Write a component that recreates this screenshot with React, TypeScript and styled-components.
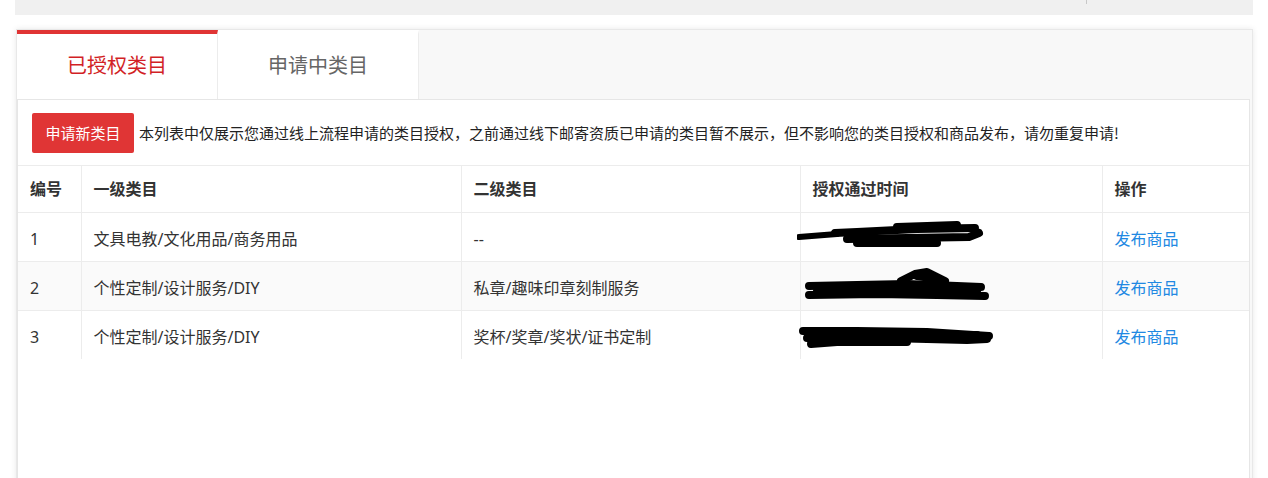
import styled, { createGlobalStyle } from "styled-components";

const GlobalStyle = createGlobalStyle`
    body {
        margin: 0;
        background: #fff;
        font-family: "Noto Sans", "Noto Sans CJK SC", sans-serif;
        color: #333;
    }
`;

const Page = styled.div`
    padding-left: 15px;
    width: 1238px;
`;

const TopBar = styled.div`
    height: 15px;
    background: #f0f0f0;
    display: flex;
    justify-content: flex-end;
    padding-right: 166px;
`;

const TopDivider = styled.span`
    width: 1px;
    height: 4px;
    background: #c8c8c8;
`;

const Panel = styled.div`
    margin: 14px 0 0 1px;
    width: 1235px;
    border: 1px solid #e8e8e8;
    background: #f8f8f8;
    box-shadow: 0 0 6px rgba(0, 0, 0, 0.09);
`;

const Tabs = styled.div`
    display: flex;
    height: 69px;
`;

const Tab = styled.div<{ $active?: boolean }>`
    width: 201px;
    box-sizing: border-box;
    display: flex;
    align-items: center;
    justify-content: center;
    background: #fff;
    border-right: 1px solid #ececec;
    border-top: 4px solid ${({ $active }) => ($active ? "#e03434" : "transparent")};
    padding-bottom: 4px;
    font-size: 20px;
    color: ${({ $active }) => ($active ? "#d21f26" : "#666")};
    font-family: "Noto Sans CJK SC", sans-serif;
`;

const Content = styled.div`
    margin: 0 2px 0 0;
    border: 1px solid #e6e6e6;
    border-bottom: none;
    background: #fff;
    min-height: 400px;
`;

const Toolbar = styled.div`
    height: 65px;
    display: flex;
    align-items: center;
    padding-left: 14px;
    gap: 5px;
    border-bottom: 1px solid #ececec;
`;

const ApplyButton = styled.button`
    width: 102px;
    height: 40px;
    border: none;
    border-radius: 2px;
    background: #e03535;
    color: #fff;
    font-size: 15px;
    font-family: "Noto Sans CJK SC", sans-serif;
    padding: 0;
`;

const Notice = styled.span`
    font-size: 15px;
    color: #222;
    font-family: "Noto Sans CJK SC", sans-serif;
    white-space: nowrap;
`;

const Table = styled.table`
    width: 1231px;
    border-collapse: collapse;
    table-layout: fixed;
    font-size: 16px;
    line-height: 20px;
`;

const HeadCell = styled.th`
    height: 46px;
    padding: 0 12px;
    text-align: left;
    font-weight: bold;
    color: #333;
    border-left: 1px solid #ececec;
    border-bottom: 1px solid #ececec;
    &:first-child {
        border-left: none;
    }
`;

const Row = styled.tr<{ $striped?: boolean; $last?: boolean }>`
    background: ${({ $striped }) => ($striped ? "#fafafa" : "#fff")};
    td {
        border-bottom: ${({ $last }) => ($last ? "none" : "1px solid #ececec")};
    }
`;

const Cell = styled.td<{ $bare?: boolean }>`
    height: ${({ $bare }) => ($bare ? "48px" : "45px")};
    padding: ${({ $bare }) => ($bare ? "0" : "3px 12px 0")};
    color: #333;
    border-left: 1px solid #ececec;
    white-space: nowrap;
    &:first-child {
        border-left: none;
    }
`;

const Link = styled.a`
    color: #2188e2;
    text-decoration: none;
    font-family: "Noto Sans CJK SC", sans-serif;
`;

const Redact = styled.svg`
    display: block;
    margin-left: -4px;
`;

function Scribble({ kind }: { kind: number }) {
    const strokes: Record<number, string[]> = {
        0: [
            "M2 24 L40 21",
            "M38 20 L60 19 L120 16 L178 15",
            "M50 26 L110 25 L172 24 L182 20",
            "M60 30 L140 30",
            "M100 14 L160 12",
        ],
        1: [
            "M12 24 L60 23 L110 22 L160 24 L184 25",
            "M12 33 L80 32 L140 33 L188 34",
            "M20 29 L180 29",
            "M104 19 L118 12 L130 10 L148 19",
            "M120 14 L140 17",
        ],
        2: [
            "M6 20 L60 20 L130 21 L192 25",
            "M10 27 L90 27 L170 29 L190 28",
            "M14 33 L40 31 L110 31",
            "M30 24 L180 24",
        ],
    };
    return (
        <Redact width="200" height="48" viewBox="0 0 200 48">
            {strokes[kind].map((d, i) => (
                <path
                    key={i}
                    d={d}
                    fill="none"
                    stroke="#000"
                    strokeWidth={i === 0 && kind === 0 ? 6 : 8}
                    strokeLinecap="round"
                    strokeLinejoin="round"
                />
            ))}
        </Redact>
    );
}

const rows = [
    { id: 1, first: "文具电教/文化用品/商务用品", second: "--" },
    { id: 2, first: "个性定制/设计服务/DIY", second: "私章/趣味印章刻制服务" },
    { id: 3, first: "个性定制/设计服务/DIY", second: "奖杯/奖章/奖状/证书定制" },
];

export default function App() {
    return (
        <Page>
            <GlobalStyle />
            <TopBar>
                <TopDivider />
            </TopBar>
            <Panel>
                <Tabs>
                    <Tab $active>已授权类目</Tab>
                    <Tab>申请中类目</Tab>
                </Tabs>
                <Content>
                    <Toolbar>
                        <ApplyButton>申请新类目</ApplyButton>
                        <Notice>
                            本列表中仅展示您通过线上流程申请的类目授权，之前通过线下邮寄资质已申请的类目暂不展示，但不影响您的类目授权和商品发布，请勿重复申请!
                        </Notice>
                    </Toolbar>
                    <Table>
                        <colgroup>
                            <col style={{ width: 63 }} />
                            <col style={{ width: 380 }} />
                            <col style={{ width: 339 }} />
                            <col style={{ width: 302 }} />
                            <col style={{ width: 147 }} />
                        </colgroup>
                        <thead>
                            <tr>
                                <HeadCell>编号</HeadCell>
                                <HeadCell>一级类目</HeadCell>
                                <HeadCell>二级类目</HeadCell>
                                <HeadCell>授权通过时间</HeadCell>
                                <HeadCell>操作</HeadCell>
                            </tr>
                        </thead>
                        <tbody>
                            {rows.map((r, i) => (
                                <Row key={r.id} $striped={i === 1} $last={i === rows.length - 1}>
                                    <Cell>{r.id}</Cell>
                                    <Cell>{r.first}</Cell>
                                    <Cell>{r.second}</Cell>
                                    <Cell $bare>
                                        <Scribble kind={i} />
                                    </Cell>
                                    <Cell>
                                        <Link href="#">发布商品</Link>
                                    </Cell>
                                </Row>
                            ))}
                        </tbody>
                    </Table>
                </Content>
            </Panel>
        </Page>
    );
}
